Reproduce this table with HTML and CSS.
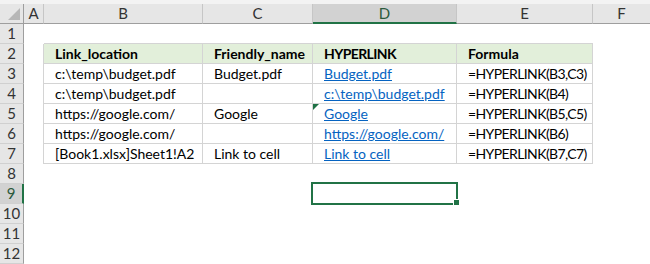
FILE: index.html
```html
<!DOCTYPE html>
<html>
<head>
    <title>HYPERLINK examples</title>
    <link rel="stylesheet" href="styles.css">
</head>
<body>
    <div class="sheet">
        <div class="strip"></div>

        <!-- column headers -->
        <div class="corner">
            <svg width="23" height="19" viewBox="0 0 23 19"><polygon points="8,16 20,4 20,16" fill="#b7b7b7"/></svg>
        </div>
        <div class="col-head">A</div>
        <div class="col-head">B</div>
        <div class="col-head">C</div>
        <div class="col-head sel">D</div>
        <div class="col-head">E</div>
        <div class="col-head last">F</div>

        <!-- row 1 -->
        <div class="row-head">1</div>
        <div class="cell"></div>
        <div class="cell top"></div>
        <div class="cell top"></div>
        <div class="cell top"></div>
        <div class="cell top"></div>
        <div class="cell"></div>

        <!-- row 2 -->
        <div class="row-head">2</div>
        <div class="cell edge"></div>
        <div class="cell tbl th">Link_location</div>
        <div class="cell tbl th">Friendly_name</div>
        <div class="cell tbl th fx">HYPERLINK</div>
        <div class="cell tbl th">Formula</div>
        <div class="cell"></div>

        <!-- row 3 -->
        <div class="row-head">3</div>
        <div class="cell edge"></div>
        <div class="cell tbl">c:\temp\budget.pdf</div>
        <div class="cell tbl">Budget.pdf</div>
        <div class="cell tbl"><a href="#">Budget.pdf</a></div>
        <div class="cell tbl fx">=HYPERLINK(B3,C3)</div>
        <div class="cell"></div>

        <!-- row 4 -->
        <div class="row-head">4</div>
        <div class="cell edge"></div>
        <div class="cell tbl">c:\temp\budget.pdf</div>
        <div class="cell tbl"></div>
        <div class="cell tbl"><a href="#">c:\temp\budget.pdf</a></div>
        <div class="cell tbl fx">=HYPERLINK(B4)</div>
        <div class="cell"></div>

        <!-- row 5 -->
        <div class="row-head">5</div>
        <div class="cell edge"></div>
        <div class="cell tbl">https://google.com/</div>
        <div class="cell tbl">Google</div>
        <div class="cell tbl flagged"><span class="flag"></span><a href="#">Google</a></div>
        <div class="cell tbl fx">=HYPERLINK(B5,C5)</div>
        <div class="cell"></div>

        <!-- row 6 -->
        <div class="row-head">6</div>
        <div class="cell edge"></div>
        <div class="cell tbl">https://google.com/</div>
        <div class="cell tbl"></div>
        <div class="cell tbl"><a href="#">https://google.com/</a></div>
        <div class="cell tbl fx">=HYPERLINK(B6)</div>
        <div class="cell"></div>

        <!-- row 7 -->
        <div class="row-head">7</div>
        <div class="cell edge"></div>
        <div class="cell tbl">[Book1.xlsx]Sheet1!A2</div>
        <div class="cell tbl">Link to cell</div>
        <div class="cell tbl"><a href="#">Link to cell</a></div>
        <div class="cell tbl fx">=HYPERLINK(B7,C7)</div>
        <div class="cell"></div>

        <!-- empty rows -->
        <div class="row-head">8</div>
        <div class="cell"></div><div class="cell"></div><div class="cell"></div><div class="cell"></div><div class="cell"></div><div class="cell"></div>
        <div class="row-head sel">9</div>
        <div class="cell"></div><div class="cell"></div><div class="cell"></div><div class="cell"></div><div class="cell"></div><div class="cell"></div>
        <div class="row-head">10</div>
        <div class="cell"></div><div class="cell"></div><div class="cell"></div><div class="cell"></div><div class="cell"></div><div class="cell"></div>
        <div class="row-head">11</div>
        <div class="cell"></div><div class="cell"></div><div class="cell"></div><div class="cell"></div><div class="cell"></div><div class="cell"></div>
        <div class="row-head">12</div>
        <div class="cell"></div><div class="cell"></div><div class="cell"></div><div class="cell"></div><div class="cell"></div><div class="cell"></div>

        <!-- active cell D9 -->
        <div class="selection"><span class="handle"></span></div>
    </div>
</body>
</html>
```

FILE: styles.css
```css
* {
    box-sizing: border-box;
}
body {
    margin: 0;
    font-family: Lato, "Open Sans", sans-serif;
    font-size: 14px;
    color: #000;
    background: #fff;
    overflow: hidden;
}
.sheet {
    position: relative;
    display: grid;
    grid-template-columns: 24px 20px 159px 110px 144px 136px 1fr;
    grid-template-rows: 4px 20px;
    grid-auto-rows: 20px;
    width: 650px;
    height: 264px;
}
.strip {
    grid-column: 1 / -1;
    background: #f3f3f3;
}
.corner {
    background: #e6e6e6;
    border-right: 1px solid #9e9e9e;
    border-bottom: 1px solid #9e9e9e;
}
.corner svg {
    display: block;
}
.col-head {
    background: #e6e6e6;
    border-right: 1px solid #c6c6c6;
    border-bottom: 1px solid #9e9e9e;
    text-align: center;
    line-height: 19px;
    font-size: 15px;
    color: #333;
}
.col-head.last {
    border-right: none;
}
.col-head.sel {
    background: #d2d2d2;
    border-bottom: 2px solid #217346;
    line-height: 18px;
    color: #2c5a3c;
}
.row-head {
    background: #e6e6e6;
    border-right: 1px solid #9e9e9e;
    border-bottom: 1px solid #d0d0d0;
    text-align: center;
    line-height: 19px;
    font-size: 15px;
    color: #333;
}
.row-head.sel {
    background: #d2d2d2;
    border-right: 2px solid #217346;
    color: #2c5a3c;
}
.cell {
    white-space: nowrap;
}
.edge {
    border-right: 1px solid #d4d4d4;
}
.top {
    border-bottom: 1px solid #d4d4d4;
}
.tbl {
    border-right: 1px solid #d4d4d4;
    border-bottom: 1px solid #d4d4d4;
    padding-left: 11px;
    line-height: 19px;
}
.th {
    background: #e2efda;
    font-weight: bold;
}
.fx {
    letter-spacing: -0.6px;
}
.tbl a {
    color: #0563c1;
    text-decoration: underline;
}
.flagged {
    position: relative;
}
.flag {
    position: absolute;
    left: 0;
    top: 0;
    width: 0;
    height: 0;
    border-top: 6px solid #1e7145;
    border-right: 6px solid transparent;
}
.selection {
    position: absolute;
    left: 311px;
    top: 182px;
    width: 147px;
    height: 23px;
    border: 2px solid #217346;
}
.handle {
    position: absolute;
    left: 140px;
    top: 15px;
    width: 7px;
    height: 7px;
    background: #217346;
    border: 1px solid #fff;
}
```
